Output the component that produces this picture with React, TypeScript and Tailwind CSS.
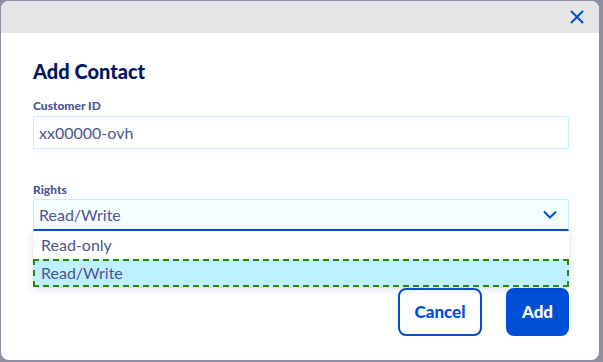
import React from "react";

export default function App() {
  const font = { fontFamily: '"Source Sans Pro", Lato, "Noto Sans", sans-serif' };
  return (
    <div className="w-[603px] h-[362px] bg-[#8f8fa3] pt-[1px] pl-[1px] overflow-hidden" style={font}>
      <div className="w-[598px] h-[359px] bg-white rounded-[8px] overflow-hidden flex flex-col">
        <div className="h-[32px] bg-[#e5e5e5] flex items-center justify-end pr-[14px] shrink-0">
          <svg width="16" height="16" viewBox="0 0 16 16" className="text-[#0050d7]">
            <path d="M2 2 L14 14 M14 2 L2 14" stroke="currentColor" strokeWidth="2" fill="none" />
          </svg>
        </div>
        <div className="pl-[32px] pr-[30px] flex flex-col relative flex-1">
          <h2 className="mt-[25px] text-[20px] leading-[26px] font-black text-[#00185e]">Add Contact</h2>
          <label className="mt-[15px] text-[12px] leading-[14px] font-black text-[#4d5592]">Customer ID</label>
          <div className="mt-[3px] h-[33px] border border-[#bef1ff] flex items-center px-[5px] text-[16px] text-[#4d5592]">
            xx00000-ovh
          </div>
          <label className="mt-[34px] text-[12px] leading-[14px] font-black text-[#4d5592]">Rights</label>
          <div className="relative mt-[2px]">
            <div className="h-[32px] bg-[#f5feff] border border-[#bef1ff] border-b-2 border-b-[#0050d7] flex items-center justify-between pl-[5px] pr-[11px] text-[16px] text-[#4d5592]">
              <span>Read/Write</span>
              <svg width="14" height="9" viewBox="0 0 14 9" className="text-[#0050d7]">
                <path d="M1 1.5 L7 7.5 L13 1.5" stroke="currentColor" strokeWidth="2" fill="none" />
              </svg>
            </div>
            <div className="absolute left-0 right-0 top-[32px] bg-white shadow-[0_2px_8px_rgba(0,14,156,0.15)] z-10 text-[16px] text-[#4d5592]">
              <div className="h-[28px] flex items-center pl-[8px]">Read-only</div>
              <div className="h-[28px] flex items-center pl-[6px] bg-[#bef1ff] border-2 border-dashed border-[#2b8b00]">
                Read/Write
              </div>
            </div>
          </div>
          <div className="mt-[57px] flex justify-end gap-[24px]">
            <button className="w-[84px] h-[48px] rounded-[8px] border-2 border-[#0050d7] bg-white text-[#0050d7] font-black text-[17px]">
              Cancel
            </button>
            <button className="w-[63px] h-[48px] rounded-[8px] bg-[#0050d7] text-white font-black text-[17px]">
              Add
            </button>
          </div>
        </div>
      </div>
    </div>
  );
}
